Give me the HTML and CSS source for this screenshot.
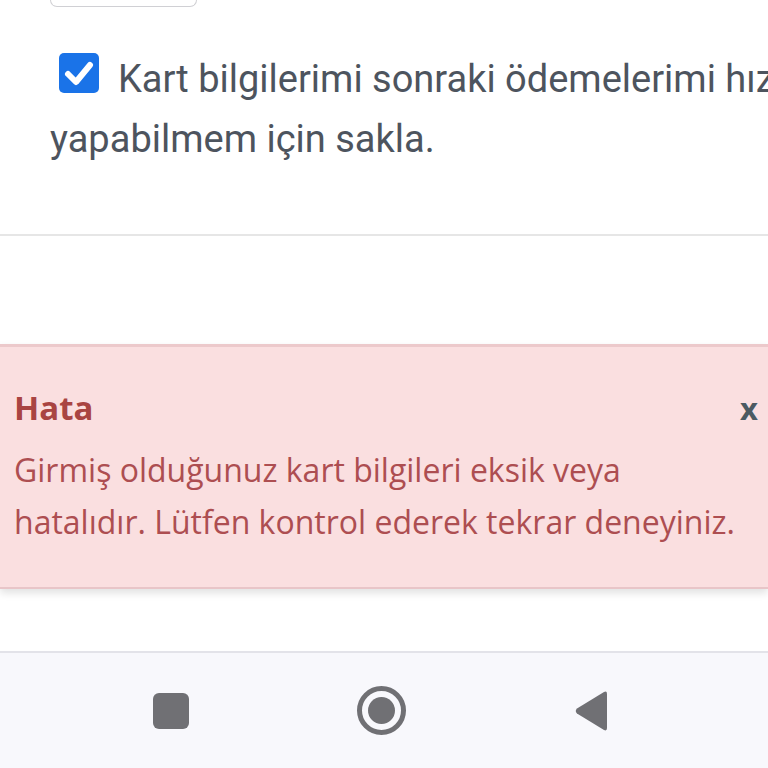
FILE: index.html
```html
<!DOCTYPE html>
<html lang="tr">
<head>
<meta charset="utf-8">
<link rel="stylesheet" href="styles.css">
</head>
<body>
<div class="page">
  <div class="input-stub"></div>
  <label class="save-row">
    <span class="checkbox">
      <svg viewBox="0 0 40 40" width="40" height="40"><path d="M9 21 L17 29 L31 12" fill="none" stroke="#fff" stroke-width="6" stroke-linecap="round" stroke-linejoin="round"/></svg>
    </span><span class="save-text">Kart bilgilerimi sonraki ödemelerimi hızlı yapabilmem için sakla.</span>
  </label>
  <div class="divider"></div>
  <div class="alert">
    <div class="alert-head">
      <span class="alert-title">Hata</span>
      <span class="alert-close">x</span>
    </div>
    <p class="alert-body">Girmiş olduğunuz kart bilgileri eksik veya hatalıdır. Lütfen kontrol ederek tekrar deneyiniz.</p>
  </div>
  <div class="navbar">
    <div class="nav-slot"><span class="nav-square"></span></div>
    <div class="nav-slot"><span class="nav-home"><span class="nav-dot"></span></span></div>
    <div class="nav-slot">
      <svg class="nav-back" viewBox="0 0 36 44" width="36" height="44"><path d="M31 3 Q34 1.5 34 5 L34 39 Q34 42.5 31 41 L4 24.5 Q1.5 22 4 19.5 Z" fill="#707074"/></svg>
    </div>
  </div>
</div>
</body>
</html>
```
FILE: styles.css
```css
html, body {
  margin: 0;
  padding: 0;
  background: #ffffff;
}
body {
  width: 768px;
  height: 768px;
  overflow: hidden;
}
.page {
  width: 768px;
  height: 768px;
  display: flex;
  flex-direction: column;
  overflow: hidden;
}
.input-stub {
  margin-left: 50px;
  width: 145px;
  height: 6px;
  border: 1.5px solid #d0d0d4;
  border-top: none;
  border-radius: 0 0 7px 7px;
  flex: none;
}
.save-row {
  display: block;
  margin-top: 42px;
  padding-left: 50px;
  width: 880px;
  font-family: Roboto, "Noto Sans", sans-serif;
  font-size: 38px;
  line-height: 60px;
  color: #4d545e;
  flex: none;
}
.checkbox {
  display: inline-block;
  width: 40px;
  height: 40px;
  margin-left: 9px;
  margin-right: 19px;
  background: #1a73e8;
  border-radius: 5px;
  vertical-align: -1px;
}
.checkbox svg {
  display: block;
}
.divider {
  margin-top: 65px;
  height: 2px;
  background: #e6e6e6;
  flex: none;
}
.alert {
  margin-top: 108px;
  background: #fadfe0;
  border-top: 3px solid #ecc9cb;
  border-bottom: 2px solid #e8c5c8;
  box-shadow: 0 4px 8px rgba(0, 0, 0, 0.12);
  padding: 38px 10px 39px 14px;
  font-family: "Open Sans", "Noto Sans", sans-serif;
  flex: none;
}
.alert-head {
  display: flex;
  justify-content: space-between;
  align-items: baseline;
  height: 45px;
  line-height: 45px;
}
.alert-title {
  font-size: 33px;
  font-weight: 700;
  color: #a94442;
}
.alert-close {
  font-size: 31px;
  font-weight: 700;
  color: #4b5a62;
}
.alert-body {
  margin: 14px 0 0 0;
  max-width: 730px;
  font-size: 32px;
  line-height: 52px;
  color: #ad4e51;
}
.navbar {
  margin-top: auto;
  height: 115px;
  background: #f8f8fc;
  border-top: 2px solid #e3e3e9;
  display: grid;
  grid-template-columns: repeat(3, 210px);
  padding-left: 66px;
  align-items: center;
  flex: none;
}
.nav-slot {
  display: flex;
  justify-content: center;
  align-items: center;
}
.nav-square {
  width: 36px;
  height: 36px;
  background: #707074;
  border-radius: 6px;
}
.nav-home {
  width: 39px;
  height: 39px;
  border: 5px solid #707074;
  border-radius: 50%;
  display: flex;
  justify-content: center;
  align-items: center;
}
.nav-dot {
  width: 27px;
  height: 27px;
  border-radius: 50%;
  background: #707074;
}
.nav-back {
  display: block;
}
```
